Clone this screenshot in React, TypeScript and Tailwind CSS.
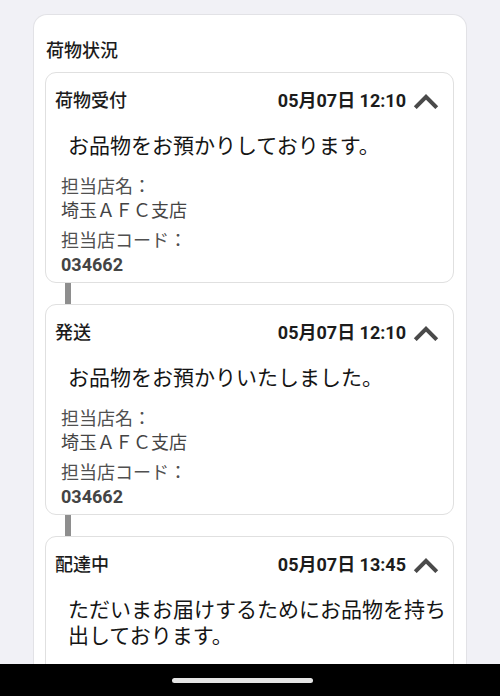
import React from "react";

type Step = {
  label: string;
  time: string;
  message: string;
  store?: string;
  code?: string;
};

const steps: Step[] = [
  {
    label: "荷物受付",
    time: "05月07日 12:10",
    message: "お品物をお預かりしております。",
    store: "埼玉ＡＦＣ支店",
    code: "034662",
  },
  {
    label: "発送",
    time: "05月07日 12:10",
    message: "お品物をお預かりいたしました。",
    store: "埼玉ＡＦＣ支店",
    code: "034662",
  },
  {
    label: "配達中",
    time: "05月07日 13:45",
    message: "ただいまお届けするためにお品物を持ち出しております。",
  },
];

function Chevron() {
  return (
    <svg width="26" height="15" viewBox="0 0 26 16" className="shrink-0" aria-hidden="true">
      <path d="M13 0 L0 13 L3.06 16.06 L13 6.13 L22.94 16.06 L26 13 Z" fill="#4a4a4a" />
    </svg>
  );
}

function StepCard({ step }: { step: Step }) {
  return (
    <div className={`rounded-[11px] border border-[#e0e0e0] bg-white pt-4 ${step.store ? "pb-[5px]" : "pb-16"}`}>
      <div className="flex items-center justify-between pl-[9px] pr-[14px]">
        <span className="text-[18px] leading-6 font-medium text-[#1c1c1c]">{step.label}</span>
        <div className="flex items-center gap-[7px]">
          <span className="text-[18px] leading-6 font-bold text-[#1c1c1c]">{step.time}</span>
          <Chevron />
        </div>
      </div>
      <p className="mt-5 pl-[22px] pr-[4px] text-[21px] leading-[26px] text-[#151515]">{step.message}</p>
      {step.store && (
        <div className="mt-4 pl-[15px] text-[18px] leading-6 text-[#505050]">
          <div>担当店名：</div>
          <div className="text-[#444444]">{step.store}</div>
          <div className="mt-[6px]">担当店コード：</div>
          <div className="font-bold text-[#444444]">{step.code}</div>
        </div>
      )}
    </div>
  );
}

export default function App() {
  return (
    <div
      className="h-[696px] overflow-hidden bg-[#f1f1f6] px-[33px] pt-[14px]"
      style={{ fontFamily: 'Roboto, "Noto Sans CJK JP", "Noto Sans", sans-serif' }}
    >
      <div className="rounded-t-[14px] border border-b-0 border-[#e2e2e6] bg-white pl-[11px] pr-[12px] pt-[24px] pb-10">
        <h2 className="pl-px text-[18px] leading-6 font-medium text-[#1c1c1c]">荷物状況</h2>
        <div className="mt-[9px] flex flex-col">
          {steps.map((s, i) => (
            <React.Fragment key={i}>
              {i > 0 && <div className="ml-[20px] h-[21px] w-[6px] bg-[#8e8e8e]" />}
              <StepCard step={s} />
            </React.Fragment>
          ))}
        </div>
      </div>
      <div className="fixed bottom-0 left-0 right-0 h-[32px] bg-black pt-[14px]">
        <div className="ml-[172px] h-[5px] w-[141px] rounded-full bg-[#e4e4e4]" />
      </div>
    </div>
  );
}
